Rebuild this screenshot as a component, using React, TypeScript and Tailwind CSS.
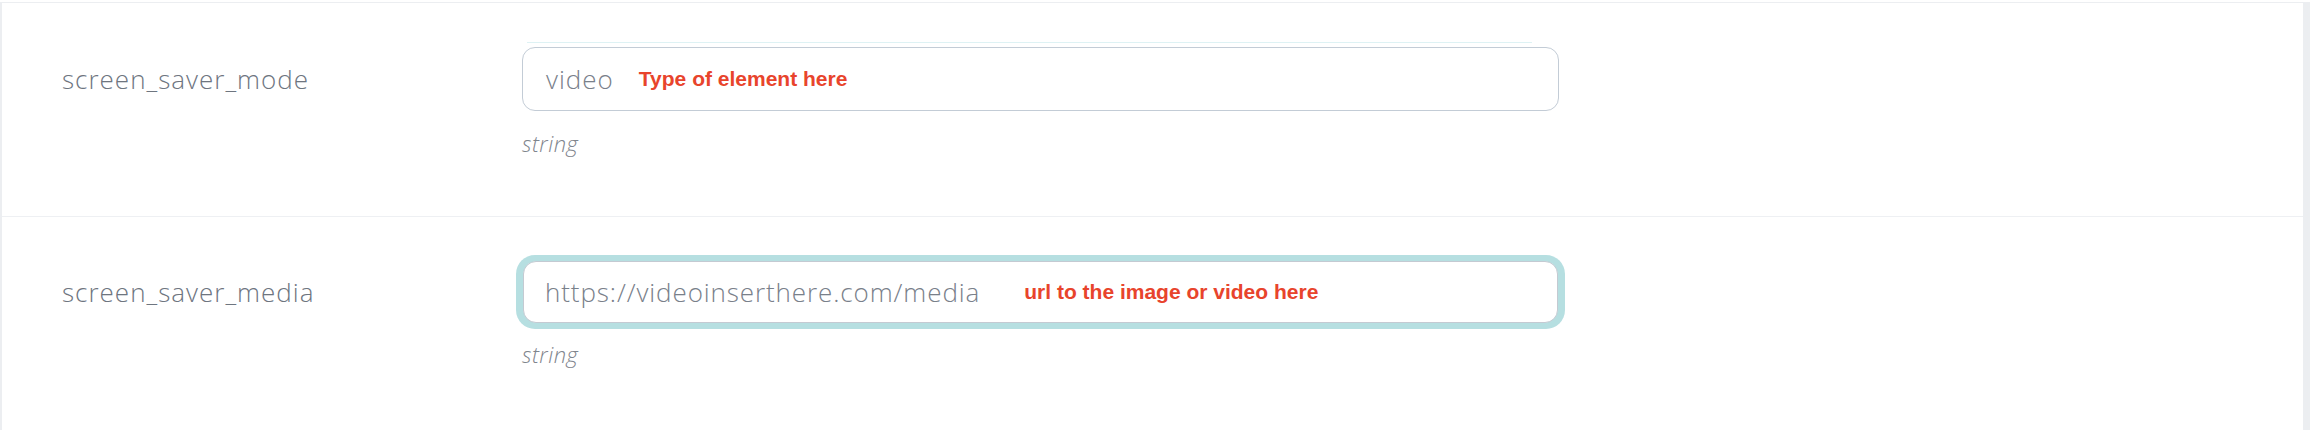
const fields = [
  {
    name: 'screen_saver_mode',
    value: 'video',
    note: 'Type of element here',
    focused: false,
  },
  {
    name: 'screen_saver_media',
    value: 'https://videoinserthere.com/media',
    note: 'url to the image or video here',
    focused: true,
  },
]

const FieldRow = ({ name, value, note, focused }: (typeof fields)[number]) => (
  <div
    className={`grid grid-cols-[520px_1037px] border-b border-[#eef0f3] last:border-b-0 ${
      focused ? 'pt-[38px] pb-[61px]' : 'pt-[37px] pb-[58px]'
    }`}
  >
    <div
      className={`flex items-center pl-[60px] text-[26px] font-light tracking-[1px] text-[#6e757f] font-['Open_Sans',sans-serif] ${
        focused ? 'h-[74px]' : 'h-[78px]'
      }`}
    >
      {name}
    </div>
    <div>
      {/* focus ring: solid on the active field, only a faint trace on the other */}
      <div
        className={`relative rounded-[19px] ${
          focused ? '-mx-[6px] p-[6px] bg-[#b6dfe1]' : '-mx-[7px] p-[7px] bg-transparent'
        }`}
      >
        {!focused && <div className="absolute top-[2px] left-[12px] right-[34px] h-px bg-[#def2f4]" />}
        <div
          className={`flex items-center rounded-[13px] border bg-white ${
            focused ? 'h-[62px] mx-px border-[#c4cad2] pl-[21px]' : 'h-[64px] border-[#c3ccd6] pl-[23px]'
          }`}
        >
          <span
            className={`text-[26px] font-light text-[#79808a] font-['Open_Sans',sans-serif] ${
              focused ? 'tracking-[0.9px]' : 'tracking-[1px]'
            }`}
          >
            {value}
          </span>
          <span
            className={`text-[21px] font-bold text-[#e8442c] font-['Liberation_Sans',sans-serif] ${
              focused ? 'ml-[44px]' : 'ml-[25px]'
            }`}
          >
            {note}
          </span>
        </div>
      </div>
      <div className="mt-[10px] h-[30px] leading-[30px] text-[22px] font-light italic tracking-[0.5px] text-[#7f858d] font-['Open_Sans',sans-serif]">
        string
      </div>
    </div>
  </div>
)

export default function App() {
  return (
    <div className="w-[2310px] h-[430px] bg-white overflow-hidden">
      <div className="h-full mt-[2px] border-t border-l-[2px] border-r-[7px] border-[#eceef1] bg-white">
        {fields.map((f) => (
          <FieldRow key={f.name} {...f} />
        ))}
      </div>
    </div>
  )
}
